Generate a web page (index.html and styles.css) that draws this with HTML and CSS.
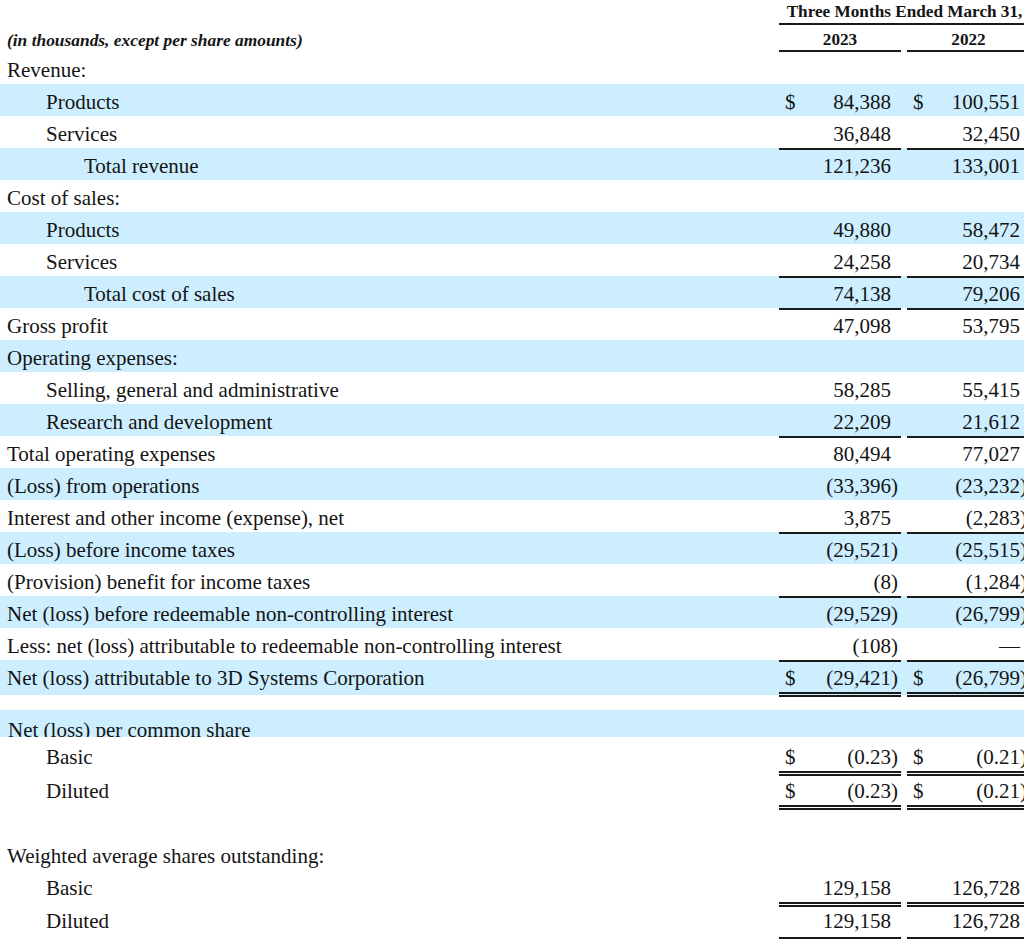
FILE: index.html
```html
<!DOCTYPE html>
<html lang="en">
<head>
<meta charset="utf-8">
<title>Statement of Operations</title>
<link rel="stylesheet" href="styles.css">
</head>
<body>
<div class="sheet">
  <div class="hdr1"><div></div><div class="period">Three Months Ended March 31,</div></div>
  <div class="hdr2"><div class="note">(in thousands, except per share amounts)</div><div class="yr">2023</div><div class="yr">2022</div></div>

  <div class="row"><div class="lbl">Revenue:</div><div class="v"></div><div class="v"></div></div>
  <div class="row sh"><div class="lbl i1">Products</div><div class="v"><span class="cur">$</span><span class="num">84,388</span></div><div class="v"><span class="cur">$</span><span class="num">100,551</span></div></div>
  <div class="row ul"><div class="lbl i1">Services</div><div class="v"><span class="num">36,848</span></div><div class="v"><span class="num">32,450</span></div></div>
  <div class="row sh"><div class="lbl i2">Total revenue</div><div class="v"><span class="num">121,236</span></div><div class="v"><span class="num">133,001</span></div></div>
  <div class="row"><div class="lbl">Cost of sales:</div><div class="v"></div><div class="v"></div></div>
  <div class="row sh"><div class="lbl i1">Products</div><div class="v"><span class="num">49,880</span></div><div class="v"><span class="num">58,472</span></div></div>
  <div class="row ul"><div class="lbl i1">Services</div><div class="v"><span class="num">24,258</span></div><div class="v"><span class="num">20,734</span></div></div>
  <div class="row sh ul"><div class="lbl i2">Total cost of sales</div><div class="v"><span class="num">74,138</span></div><div class="v"><span class="num">79,206</span></div></div>
  <div class="row"><div class="lbl">Gross profit</div><div class="v"><span class="num">47,098</span></div><div class="v"><span class="num">53,795</span></div></div>
  <div class="row sh"><div class="lbl">Operating expenses:</div><div class="v"></div><div class="v"></div></div>
  <div class="row"><div class="lbl i1">Selling, general and administrative</div><div class="v"><span class="num">58,285</span></div><div class="v"><span class="num">55,415</span></div></div>
  <div class="row sh ul"><div class="lbl i1">Research and development</div><div class="v"><span class="num">22,209</span></div><div class="v"><span class="num">21,612</span></div></div>
  <div class="row"><div class="lbl">Total operating expenses</div><div class="v"><span class="num">80,494</span></div><div class="v"><span class="num">77,027</span></div></div>
  <div class="row sh"><div class="lbl">(Loss) from operations</div><div class="v"><span class="num">(33,396<span class="rp">)</span></span></div><div class="v"><span class="num">(23,232<span class="rp">)</span></span></div></div>
  <div class="row ul"><div class="lbl">Interest and other income (expense), net</div><div class="v"><span class="num">3,875</span></div><div class="v"><span class="num">(2,283<span class="rp">)</span></span></div></div>
  <div class="row sh"><div class="lbl">(Loss) before income taxes</div><div class="v"><span class="num">(29,521<span class="rp">)</span></span></div><div class="v"><span class="num">(25,515<span class="rp">)</span></span></div></div>
  <div class="row ul"><div class="lbl">(Provision) benefit for income taxes</div><div class="v"><span class="num">(8<span class="rp">)</span></span></div><div class="v"><span class="num">(1,284<span class="rp">)</span></span></div></div>
  <div class="row sh"><div class="lbl">Net (loss) before redeemable non-controlling interest</div><div class="v"><span class="num">(29,529<span class="rp">)</span></span></div><div class="v"><span class="num">(26,799<span class="rp">)</span></span></div></div>
  <div class="row ul"><div class="lbl">Less: net (loss) attributable to redeemable non-controlling interest</div><div class="v"><span class="num">(108<span class="rp">)</span></span></div><div class="v"><span class="num">—</span></div></div>
  <div class="row sh dbl total"><div class="lbl">Net (loss) attributable to 3D Systems Corporation</div><div class="v"><span class="cur">$</span><span class="num">(29,421<span class="rp">)</span></span></div><div class="v"><span class="cur">$</span><span class="num">(26,799<span class="rp">)</span></span></div></div>

  <div class="band"><div class="lbl">Net (loss) per common share</div></div>
  <div class="row dbl eps"><div class="lbl i1">Basic</div><div class="v"><span class="cur">$</span><span class="num">(0.23<span class="rp">)</span></span></div><div class="v"><span class="cur">$</span><span class="num">(0.21<span class="rp">)</span></span></div></div>
  <div class="row dbl eps"><div class="lbl i1">Diluted</div><div class="v"><span class="cur">$</span><span class="num">(0.23<span class="rp">)</span></span></div><div class="v"><span class="cur">$</span><span class="num">(0.21<span class="rp">)</span></span></div></div>

  <div class="row gapped"><div class="lbl">Weighted average shares outstanding:</div><div class="v"></div><div class="v"></div></div>
  <div class="row dbl eps2"><div class="lbl i1">Basic</div><div class="v"><span class="num">129,158</span></div><div class="v"><span class="num">126,728</span></div></div>
  <div class="row ul last"><div class="lbl i1">Diluted</div><div class="v"><span class="num">129,158</span></div><div class="v"><span class="num">126,728</span></div></div>
</div>
</body>
</html>
```
FILE: styles.css
```css
html, body {
  margin: 0;
  padding: 0;
  overflow: hidden;
  background: #ffffff;
}

.sheet {
  width: 1030px;
  font-family: "Liberation Serif", "Times New Roman", serif;
  font-size: 21px;
  color: #141414;
}

.hdr1, .hdr2, .row {
  display: grid;
  grid-template-columns: 773px 122px 123px;
  column-gap: 6px;
}

.hdr1 {
  height: 25px;
  box-sizing: border-box;
}

.period {
  grid-column: 2 / 4;
  text-align: center;
  font-weight: bold;
  font-size: 17.2px;
  line-height: 23px;
  border-bottom: 2px solid #1a1a1a;
}

.hdr2 {
  height: 27px;
}

.note {
  font-weight: bold;
  font-style: italic;
  font-size: 17.4px;
  line-height: 20px;
  padding: 5px 0 0 7px;
}

.yr {
  text-align: center;
  font-weight: bold;
  font-size: 17.2px;
  line-height: 20px;
  padding-top: 5px;
  border-bottom: 2px solid #1a1a1a;
}

.row {
  height: 32px;
  line-height: 28px;
}

.row > div {
  box-sizing: border-box;
  padding-top: 4px;
  white-space: nowrap;
}

.sh {
  background: #cceeff;
}

.lbl {
  padding-left: 7px;
}

.lbl.i1 {
  padding-left: 46px;
}

.lbl.i2 {
  padding-left: 84px;
}

.v {
  display: flex;
  padding-left: 6px;
  padding-right: 10px;
}

.num {
  margin-left: auto;
}

.rp {
  margin-right: -0.333em;
}

.ul .v {
  border-bottom: 2px solid #1a1a1a;
}

.dbl .v {
  border-bottom: 5px double #1a1a1a;
}

.total {
  height: 35px;
  margin-bottom: 15px;
}

.band {
  height: 27px;
  overflow: hidden;
  background: #cceeff;
  line-height: 28px;
  margin-bottom: 2px;
}

.band .lbl {
  padding-top: 6px;
  padding-left: 8px;
}

.eps {
  height: 34px;
}

.gapped {
  margin-top: 31px;
}

.eps2 {
  height: 37px;
}

.last > div {
  padding-top: 0;
}
```
